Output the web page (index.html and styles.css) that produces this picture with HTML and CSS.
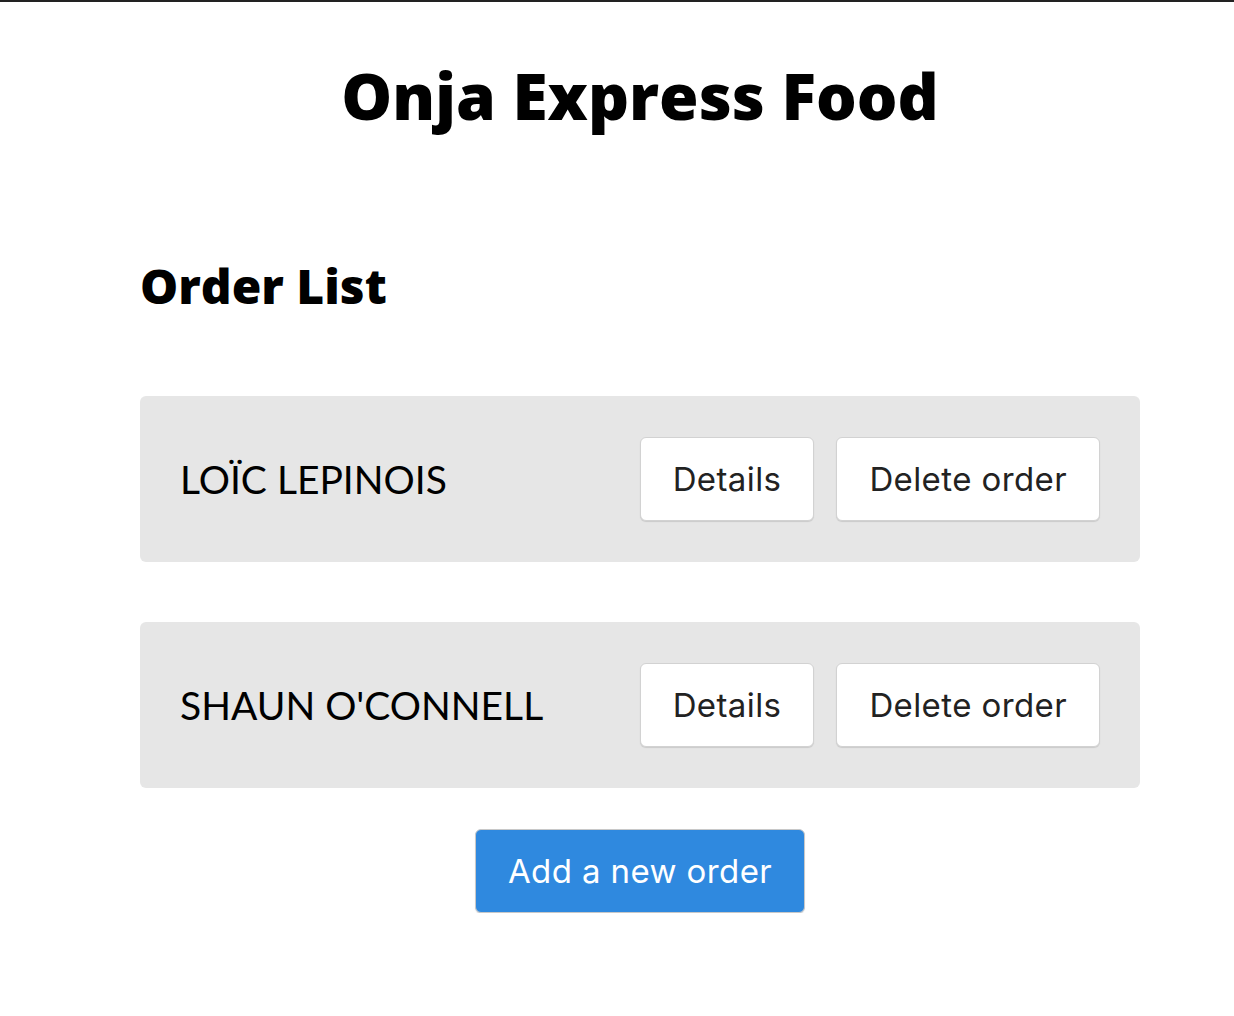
FILE: index.html
```html
<!DOCTYPE html>
<html lang="en">
<head>
<meta charset="utf-8">
<title>Onja Express Food</title>
<link rel="stylesheet" href="styles.css">
</head>
<body>
<div class="page">
  <h1 class="title">Onja Express Food</h1>
  <main class="container">
    <h2 class="subtitle">Order List</h2>
    <ul class="orders">
      <li class="order">
        <span class="name">LOÏC LEPINOIS</span>
        <div class="actions">
          <button class="btn">Details</button>
          <button class="btn">Delete order</button>
        </div>
      </li>
      <li class="order">
        <span class="name">SHAUN O'CONNELL</span>
        <div class="actions">
          <button class="btn">Details</button>
          <button class="btn">Delete order</button>
        </div>
      </li>
    </ul>
    <div class="add-row">
      <button class="btn btn-primary">Add a new order</button>
    </div>
  </main>
</div>
</body>
</html>
```
FILE: styles.css
```css
html, body {
  margin: 0;
  padding: 0;
}
body {
  border-top: 2px solid #222;
  background: #fff;
  overflow-x: hidden;
  font-family: "Lato", "Open Sans", sans-serif;
  color: #000;
}
.page {
  width: 1280px;
}
.title {
  margin: 62px 0 0;
  font-family: "Open Sans", "Lato", sans-serif;
  font-size: 64px;
  line-height: 1;
  font-weight: 800;
  text-align: center;
}
.container {
  width: 1000px;
  margin: 0 auto;
}
.subtitle {
  margin: 134px 0 0;
  font-family: "Open Sans", "Lato", sans-serif;
  font-size: 48px;
  line-height: 1;
  font-weight: 800;
}
.orders {
  list-style: none;
  margin: 86px 0 0;
  padding: 0;
  display: flex;
  flex-direction: column;
  gap: 60px;
}
.order {
  height: 166px;
  box-sizing: border-box;
  padding: 0 40px;
  background: #e6e6e6;
  border-radius: 6px;
  display: flex;
  align-items: center;
  justify-content: space-between;
}
.name {
  font-size: 39px;
  font-weight: 400;
}
.actions {
  display: flex;
  gap: 22px;
}
.btn {
  height: 84px;
  box-sizing: border-box;
  padding: 0 32px;
  font-family: "Inter", "Roboto", sans-serif;
  font-size: 33px;
  letter-spacing: 0.4px;
  color: #222;
  background: #fff;
  border: 1px solid #d2d2d2;
  border-radius: 6px;
  box-shadow: 0 1px 1px rgba(0, 0, 0, 0.12);
  cursor: pointer;
}
.add-row {
  display: flex;
  justify-content: center;
  margin-top: 41px;
}
.btn-primary {
  background: #2f89df;
  color: #fff;
  border-color: #c8c8c8;
}
```
